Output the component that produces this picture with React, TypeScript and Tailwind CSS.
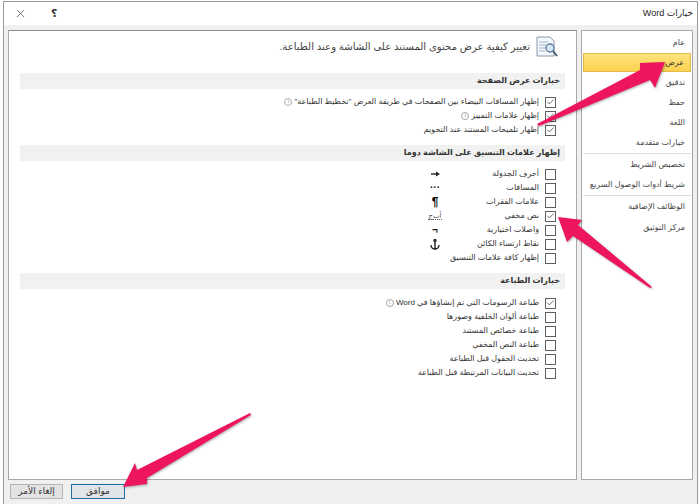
import { Check, X } from 'lucide-react';
import type { ReactNode } from 'react';

const navItems = [
  { label: 'عام', h: 'h-[20px]' },
  { label: 'عرض', h: 'h-[19px] mb-[1px]', active: true },
  { label: 'تدقيق', h: 'h-[20px]' },
  { label: 'حفظ', h: 'h-[20px]' },
  { label: 'اللغة', h: 'h-[20px]' },
  { label: 'خيارات متقدمة', h: 'h-[21px] border-b border-[#ddd]' },
  { label: 'تخصيص الشريط', h: 'h-[21px]' },
  { label: 'شريط أدوات الوصول السريع', h: 'h-[21px] border-b border-[#ddd]' },
  { label: 'الوظائف الإضافية', h: 'h-[21px]' },
  { label: 'مركز التوثيق', h: 'h-[21px]' },
];

const formatRows = [
  { label: 'أحرف الجدولة', glyph: 'tab', checked: false },
  { label: 'المسافات', glyph: 'dots', checked: false },
  { label: 'علامات الفقرات', glyph: 'para', checked: false },
  { label: 'نص مخفي', glyph: 'hidden', checked: true },
  { label: 'واصلات اختيارية', glyph: 'hyphen', checked: false },
  { label: 'نقاط ارتساء الكائن', glyph: 'anchor', checked: false },
  { label: 'إظهار كافة علامات التنسيق', glyph: '', checked: false },
];

const printRows = [
  { label: 'طباعة الرسومات التي تم إنشاؤها في Word', checked: true, info: true },
  { label: 'طباعة ألوان الخلفية وصورها', checked: false },
  { label: 'طباعة خصائص المستند', checked: false },
  { label: 'طباعة النص المخفي', checked: false },
  { label: 'تحديث الحقول قبل الطباعة', checked: false },
  { label: 'تحديث البيانات المرتبطة قبل الطباعة', checked: false },
];

function Info() {
  return (
    <span className="inline-flex items-center justify-center w-[8px] h-[8px] rounded-full border border-[#aaa] text-[5px] leading-none text-[#888] mr-[2px] align-middle">
      i
    </span>
  );
}

function Box({ checked }: { checked?: boolean }) {
  return (
    <span className="w-[11px] h-[11px] shrink-0 border border-[#5f5f5f] bg-white flex items-center justify-center">
      {checked && <Check size={10} strokeWidth={1.8} className="text-[#222]" />}
    </span>
  );
}

function Row({ checked, children, glyph }: { checked?: boolean; children: ReactNode; glyph?: ReactNode }) {
  return (
    <div className="h-[14px] flex items-center gap-[6px] pr-[9px] text-[8px] text-[#333] whitespace-nowrap">
      <Box checked={checked} />
      {glyph !== undefined ? (
        <>
          <span className="w-[88px]">{children}</span>
          <span className="w-[20px] flex justify-center text-[#222]">{glyph}</span>
        </>
      ) : (
        <span>{children}</span>
      )}
    </div>
  );
}

function SectionHeader({ children }: { children: ReactNode }) {
  return (
    <div className="h-[16px] bg-[#f1f1f1] flex items-center pr-[5px] text-[8px] font-bold text-[#333]">
      {children}
    </div>
  );
}

function Glyph({ name }: { name: string }) {
  if (name === 'anchor') {
    return (
      <svg width="10" height="11" viewBox="0 0 10 11" fill="none" stroke="#222" strokeWidth="1.4">
        <circle cx="5" cy="1.6" r="1" />
        <path d="M5 2.6V10M1 6c0 2.5 2 4 4 4s4-1.500 4-4" />
      </svg>
    );
  }
  if (name === 'tab') {
    return (
      <svg width="9" height="6" viewBox="0 0 9 6">
        <path d="M0 3h5" stroke="#222" strokeWidth="1.4" />
        <path d="M5 .5L9 3 5 5.500z" fill="#222" />
      </svg>
    );
  }
  if (name === 'dots') return <span className="text-[10px] font-bold leading-none">···</span>;
  if (name === 'para') return <span className="text-[12px] font-bold leading-none text-black">¶</span>;
  if (name === 'hyphen') return <span className="text-[10px] font-bold leading-none">¬</span>;
  if (name === 'hidden') {
    return <span className="text-[7px] border-b border-dotted border-[#555] leading-none text-[#555]">ﺃﺏﺝ</span>;
  }
  return null;
}

function Arrows() {
  return (
    <svg
      className="absolute inset-0 pointer-events-none drop-shadow-[1px_1px_1px_rgba(0,0,0,0.3)]"
      width="700"
      height="504"
      viewBox="0 0 700 504"
    >
      <polygon fill="#ee1560" points="537,124 640,70 640,63 665,62 655,88 650,80 539,126" />
      <polygon fill="#ee1560" points="652,287 578,225 582,220 558,217 567,242 573,236 650,288" />
      <polygon fill="#ee1560" points="250,413 137,470 135,463 123,487 147,484 147,478 251,415" />
    </svg>
  );
}

export default function App() {
  return (
    <div
      dir="rtl"
      className="relative w-[700px] h-[504px] bg-white overflow-hidden pl-[3px] pr-[2px] pt-[1px] font-['Liberation_Sans','DejaVu_Sans',sans-serif]"
    >
      <div className="h-full flex flex-col border-x border-t border-[#9a9a9a] bg-[#f0f0f0]">
        {/* title bar */}
        <div className="h-[23px] shrink-0 bg-white flex items-center justify-between pr-[4px] pl-[10px] text-[9px] text-[#222]">
          <span>خيارات Word</span>
          <div className="flex items-center gap-[24px]">
            <span className="text-[11px] font-bold text-[#333]">؟</span>
            <X size={13} strokeWidth={1.2} className="text-[#333]" />
          </div>
        </div>

        <div className="h-[450px] mt-[5px] px-[4px] flex gap-[4px]">
          {/* sidebar */}
          <div className="w-[112px] shrink-0 bg-white border border-[#a8a8a8] pt-[2px] px-[1px] text-[8px] text-[#444]">
            {navItems.map((item) => (
              <div
                key={item.label}
                className={`${item.h} flex items-center pr-[6px] whitespace-nowrap ${
                  item.active ? 'bg-gradient-to-b from-[#fde47c] to-[#fbd24f] border border-[#e2b94a] text-[#333]' : ''
                }`}
              >
                {item.label}
              </div>
            ))}
          </div>

          {/* main panel */}
          <div className="flex-1 bg-white border border-[#a8a8a8] border-t-[#8a8a8a] px-[11px] pt-[5px]">
            <div className="h-[22px] flex items-center gap-[6px] pr-[7px] text-[10.1px] text-[#444] whitespace-nowrap">
              <svg width="22" height="22" viewBox="0 0 22 22" fill="none" className="shrink-0">
                <path d="M1 1h13l4 4v15H1z" fill="#f4f7fb" stroke="#8c98a8" />
                <path d="M3 6h9M3 9h7M3 12h6M3 15h6" stroke="#9fb4cc" />
                <circle cx="14" cy="12" r="4" fill="#d6e8f7" stroke="#5f7f9f" strokeWidth="1.400" />
                <path d="M17 15l4 5" stroke="#4c5a68" strokeWidth="2" />
              </svg>
              <span>تغيير كيفية عرض محتوى المستند على الشاشة وعند الطباعة.</span>
            </div>

            <div className="mt-[15px]">
              <SectionHeader>خيارات عرض الصفحة</SectionHeader>
              <div className="mt-[6px]">
                <Row checked>
                  إظهار المسافات البيضاء بين الصفحات في طريقة العرض "تخطيط الطباعة"
                  <Info />
                </Row>
                <Row checked>
                  إظهار علامات التمييز
                  <Info />
                </Row>
                <Row checked>إظهار تلميحات المستند عند التحويم</Row>
              </div>
            </div>

            <div className="mt-[8px]">
              <SectionHeader>إظهار علامات التنسيق على الشاشة دوما</SectionHeader>
              <div className="mt-[6px]">
                {formatRows.map((row) => (
                  <Row key={row.label} checked={row.checked} glyph={<Glyph name={row.glyph} />}>
                    {row.label}
                  </Row>
                ))}
              </div>
            </div>

            <div className="mt-[8px]">
              <SectionHeader>خيارات الطباعة</SectionHeader>
              <div className="mt-[7px]">
                {printRows.map((row) => (
                  <Row key={row.label} checked={row.checked}>
                    {row.label}
                    {row.info && <Info />}
                  </Row>
                ))}
              </div>
            </div>
          </div>
        </div>

        {/* buttons */}
        <div dir="ltr" className="flex items-start gap-[8px] pl-[6px] pt-[4px]">
          <button className="w-[53px] h-[15px] bg-[#e3e3e3] border border-[#b5b5b5] text-[9px] text-[#333] flex items-center justify-center">
            إلغاء الأمر
          </button>
          <button className="w-[54px] h-[15px] bg-[#e1e4e8] border border-[#1c6ea4] text-[9px] text-[#333] flex items-center justify-center">
            موافق
          </button>
        </div>
      </div>
      <Arrows />
    </div>
  );
}
